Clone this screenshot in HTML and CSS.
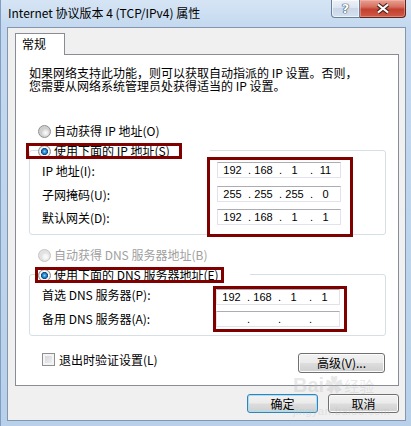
FILE: index.html
```html
<!DOCTYPE html>
<html lang="zh-CN">
<head>
    <meta charset="UTF-8">
    <meta name="viewport" content="width=device-width, initial-scale=1.0">
    <title>Internet 协议版本 4 (TCP/IPv4) 属性</title>
    <link rel="stylesheet" href="styles.css">
</head>
<body>
    <div class="window">
        <div class="titlebar">
            <span class="title">Internet 协议版本 4 (TCP/IPv4) 属性</span>
            <div class="caption-btns">
                <span class="cap-help">?</span>
                <span class="cap-close">
                    <svg width="14" height="11" viewBox="0 0 14 11">
                        <path d="M2 1.5 L12 9.5 M12 1.5 L2 9.5" stroke="#4a2520" stroke-width="4.2" fill="none"/>
                        <path d="M2 1.5 L12 9.5 M12 1.5 L2 9.5" stroke="#fff" stroke-width="2.2" fill="none"/>
                    </svg>
                </span>
            </div>
        </div>

        <div class="client">
            <div class="tabs"><span class="tab">常规</span></div>

            <div class="panel">
                <p class="intro">如果网络支持此功能，则可以获取自动指派的 IP 设置。否则，<br>您需要从网络系统管理员处获得适当的 IP 设置。</p>

                <div class="radio-row"><span class="radio"></span><span>自动获得 IP 地址(O)</span></div>

                <div class="group group-ip">
                    <div class="group-head head-ip">
                        <span class="head-inner ip-inner"><span class="radio on"></span><span>使用下面的 IP 地址(S)</span></span>
                    </div>
                    <div class="group-body">
                        <div class="labels labels-ip">
                            <div>IP 地址(I):</div>
                            <div>子网掩码(U):</div>
                            <div>默认网关(D):</div>
                        </div>
                        <div class="mark-box ip-wrap">
                            <div class="ipbox"><span class="oct">192</span><span class="dot">.</span><span class="oct">168</span><span class="dot">.</span><span class="oct">1</span><span class="dot">.</span><span class="oct">11</span></div>
                            <div class="ipbox"><span class="oct">255</span><span class="dot">.</span><span class="oct">255</span><span class="dot">.</span><span class="oct">255</span><span class="dot">.</span><span class="oct">0</span></div>
                            <div class="ipbox"><span class="oct">192</span><span class="dot">.</span><span class="oct">168</span><span class="dot">.</span><span class="oct">1</span><span class="dot">.</span><span class="oct">1</span></div>
                        </div>
                    </div>
                </div>

                <div class="radio-row disabled"><span class="radio"></span><span>自动获得 DNS 服务器地址(B)</span></div>

                <div class="group group-dns">
                    <div class="group-head head-dns">
                        <span class="head-inner dns-inner"><span class="radio on"></span><span>使用下面的 DNS 服务器地址(E)</span></span>
                    </div>
                    <div class="group-body">
                        <div class="labels labels-dns">
                            <div>首选 DNS 服务器(P):</div>
                            <div>备用 DNS 服务器(A):</div>
                        </div>
                        <div class="mark-box dns-wrap">
                            <div class="ipbox"><span class="oct">192</span><span class="dot">.</span><span class="oct">168</span><span class="dot">.</span><span class="oct">1</span><span class="dot">.</span><span class="oct">1</span></div>
                            <div class="ipbox"><span class="oct"></span><span class="dot">.</span><span class="oct"></span><span class="dot">.</span><span class="oct"></span><span class="dot">.</span><span class="oct"></span></div>
                        </div>
                    </div>
                </div>

                <div class="options">
                    <label class="check-row"><span class="checkbox"></span><span>退出时验证设置(L)</span></label>
                    <button class="btn btn-adv">高级(V)...</button>
                </div>
            </div>

            <div class="actions">
                <button class="btn btn-default">确定</button>
                <button class="btn">取消</button>
            </div>
        </div>

        <div class="watermark">
            <div class="wm-top">Bai<span class="wm-paw">&#10047;</span><span class="wm-cn">经验</span></div>
            <div class="wm-url">jingyan.baidu.com</div>
        </div>
    </div>
</body>
</html>
```

FILE: styles.css
```css
* {
    box-sizing: border-box;
}

html, body {
    margin: 0;
    padding: 0;
}

body {
    width: 411px;
    height: 426px;
    overflow: hidden;
    font-family: "Noto Sans CJK SC", "Noto Sans", sans-serif;
    font-size: 12px;
    color: #000;
    background: linear-gradient(to bottom, #d6e5f5 0, #c4d9ef 26px, #b9d0ea 100%);
}

.window {
    position: relative;
    height: 426px;
    border-left: 1px solid #7f9ec2;
}

/* title bar */
.titlebar {
    height: 27px;
    display: flex;
    align-items: flex-start;
}

.title {
    padding: 5px 0 0 7px;
    line-height: 16px;
    font-size: 12px;
    color: #000;
}

.caption-btns {
    margin-left: auto;
    margin-right: 5px;
    display: flex;
}

.cap-help {
    width: 29px;
    height: 18px;
    border: 1px solid #6c7f99;
    border-top: none;
    border-radius: 0 0 0 4px;
    background: linear-gradient(to bottom, #edf2f8 0, #dce5f0 45%, #c8d6e7 50%, #d5e1ef 100%);
    box-shadow: inset 0 0 0 1px rgba(255, 255, 255, 0.6);
    text-align: center;
    font: bold 13px/17px "DejaVu Sans", sans-serif;
    color: #fff;
    text-shadow: 0 0 1px #2c3e55, 0 0 1px #2c3e55, 0 0 1px #2c3e55;
}

.cap-close {
    width: 46px;
    height: 18px;
    border: 1px solid #5a2620;
    border-top: none;
    border-left: none;
    border-radius: 0 0 4px 0;
    background: linear-gradient(to bottom, #e8a194 0, #d6705f 40%, #c3402f 55%, #cf5a45 100%);
    box-shadow: inset 0 0 0 1px rgba(255, 200, 190, 0.4);
    display: flex;
    align-items: center;
    justify-content: center;
}

/* client area */
.client {
    margin: 0 5px 0 6px;
    height: 394px;
    background: #f0f0f0;
    border: 1px solid #8396ae;
}

.tabs {
    display: flex;
    padding: 5px 0 0 7px;
}

.tab {
    position: relative;
    z-index: 1;
    width: 50px;
    height: 22px;
    margin-bottom: -1px;
    padding: 2px 0 0 6px;
    line-height: 16px;
    background: #fff;
    border: 1px solid #898c95;
    border-bottom: none;
}

.panel {
    margin-left: 7px;
    width: 384px;
    height: 332px;
    padding: 11px 12px 0 13px;
    background: #fff;
    border: 1px solid #898c95;
}

.intro {
    margin: 0;
    line-height: 13px;
}

.radio-row {
    display: flex;
    align-items: center;
    gap: 3px;
    height: 16px;
    line-height: 16px;
    margin: 31px 0 0 9px;
}

.radio-row.disabled {
    margin-top: 12px;
    color: #a0a0a0;
}

.radio {
    flex: none;
    width: 13px;
    height: 13px;
    border-radius: 50%;
    border: 1px solid #8e8f8f;
    background: radial-gradient(circle closest-side at 60% 62%, #fbfbfb 0, #ececec 50%, #cfcfcf 100%);
}

.radio.on {
    background: radial-gradient(circle closest-side at 50% 50%, #8fd3fb 0, #2f93d8 28%, #0f5ca6 52%, #1c3f6a 62%, #fff 68%, #f2f2f2 82%, #d6d6d6 100%);
}

.disabled .radio {
    border-color: #c4c4c4;
    background: radial-gradient(circle closest-side at 60% 62%, #fcfcfc 0, #f2f2f2 60%, #e2e2e2 100%);
}

/* group boxes */
.group {
    border: 1px solid #d5dfe5;
    border-radius: 3px;
}

.group-ip {
    margin-top: 11px;
    height: 85px;
}

.group-dns {
    margin-top: 11px;
    height: 62px;
}

.group-head {
    display: flex;
    align-items: center;
    height: 16px;
    line-height: 16px;
    margin-top: -8px;
    outline: 3px solid #800000;
    outline-offset: -3px;
}

.head-ip {
    margin-left: -4px;
    padding-left: 12px;
    width: 156px;
}

.head-dns {
    margin-left: 5px;
    padding-left: 3px;
    width: 189px;
}

.head-inner {
    flex: none;
    display: flex;
    align-items: center;
    gap: 3px;
    background: #fff;
}

.ip-inner {
    width: 172px;
}

.dns-inner {
    width: 212px;
}

.group-body {
    display: flex;
    align-items: flex-start;
}

.labels {
    flex: none;
    padding-left: 12px;
}

.labels-ip {
    width: 177px;
}

.labels-ip div {
    height: 23.5px;
    line-height: 23.5px;
}

.labels-dns {
    width: 183px;
}

.labels-dns div {
    height: 24px;
    line-height: 24px;
}

.mark-box {
    flex: none;
    border: 3px solid #800000;
}

.ip-wrap {
    margin-top: -2px;
    padding: 2px 9px 9px 7px;
}

.ip-wrap .ipbox + .ipbox {
    margin-top: 7.5px;
}

.dns-wrap {
    margin-top: 3px;
    padding: 0 4px 2px 0;
}

.dns-wrap .ipbox + .ipbox {
    margin-top: 6px;
}

.ipbox {
    display: flex;
    width: 124px;
    height: 16px;
    padding-left: 2px;
    background: #fff;
    border: 1px solid #e2e3ea;
    border-top-color: #abadb3;
    font-family: "Liberation Sans", Arial, sans-serif;
    font-size: 11px;
    line-height: 14px;
}

.oct {
    width: 25px;
    text-align: center;
}

.dot {
    width: 6px;
    text-align: right;
}

/* bottom of the tab page */
.options {
    display: flex;
    align-items: flex-start;
    justify-content: space-between;
    margin-top: 17px;
    padding-left: 13px;
}

.check-row {
    display: flex;
    align-items: center;
    gap: 4px;
    height: 13px;
    line-height: 13px;
}

.checkbox {
    width: 13px;
    height: 13px;
    border: 1px solid #8e8f8f;
    background: linear-gradient(135deg, #cdd0d5 0, #f5f5f5 100%);
    box-shadow: inset 0 0 0 2px #f4f4f4;
}

.btn {
    font-family: "Noto Sans CJK SC", "Noto Sans", sans-serif;
    font-size: 12px;
    line-height: 16px;
    color: #000;
    padding: 0;
    border: 1px solid #707070;
    border-radius: 3px;
    background: linear-gradient(to bottom, #f2f2f2 0, #ebebeb 48%, #dddddd 52%, #cfcfcf 100%);
    box-shadow: inset 0 0 0 1px #fbfbfb;
}

.btn-adv {
    width: 87px;
    height: 20px;
    margin-right: 1px;
}

.actions {
    display: flex;
    justify-content: flex-end;
    gap: 10px;
    margin: 8px 6px 0 0;
}

.actions .btn {
    width: 71px;
    height: 19px;
}

.btn-default {
    border-color: #3c7fb1;
    box-shadow: inset 0 0 0 1px #9ee3fb;
}

/* baidu watermark */
.watermark {
    position: absolute;
    left: 292px;
    top: 375px;
    color: rgba(190, 190, 190, 0.35);
    font-family: "Liberation Sans", Arial, sans-serif;
    pointer-events: none;
}

.wm-top {
    font-size: 20px;
    font-weight: bold;
    line-height: 20px;
}

.wm-paw {
    font-size: 18px;
    margin: 0 1px;
}

.wm-cn {
    font-family: "Noto Sans CJK SC", sans-serif;
    font-size: 15px;
    font-weight: normal;
}

.wm-url {
    margin-top: 9px;
    font-size: 11px;
    line-height: 12px;
    letter-spacing: 0.5px;
}
```
